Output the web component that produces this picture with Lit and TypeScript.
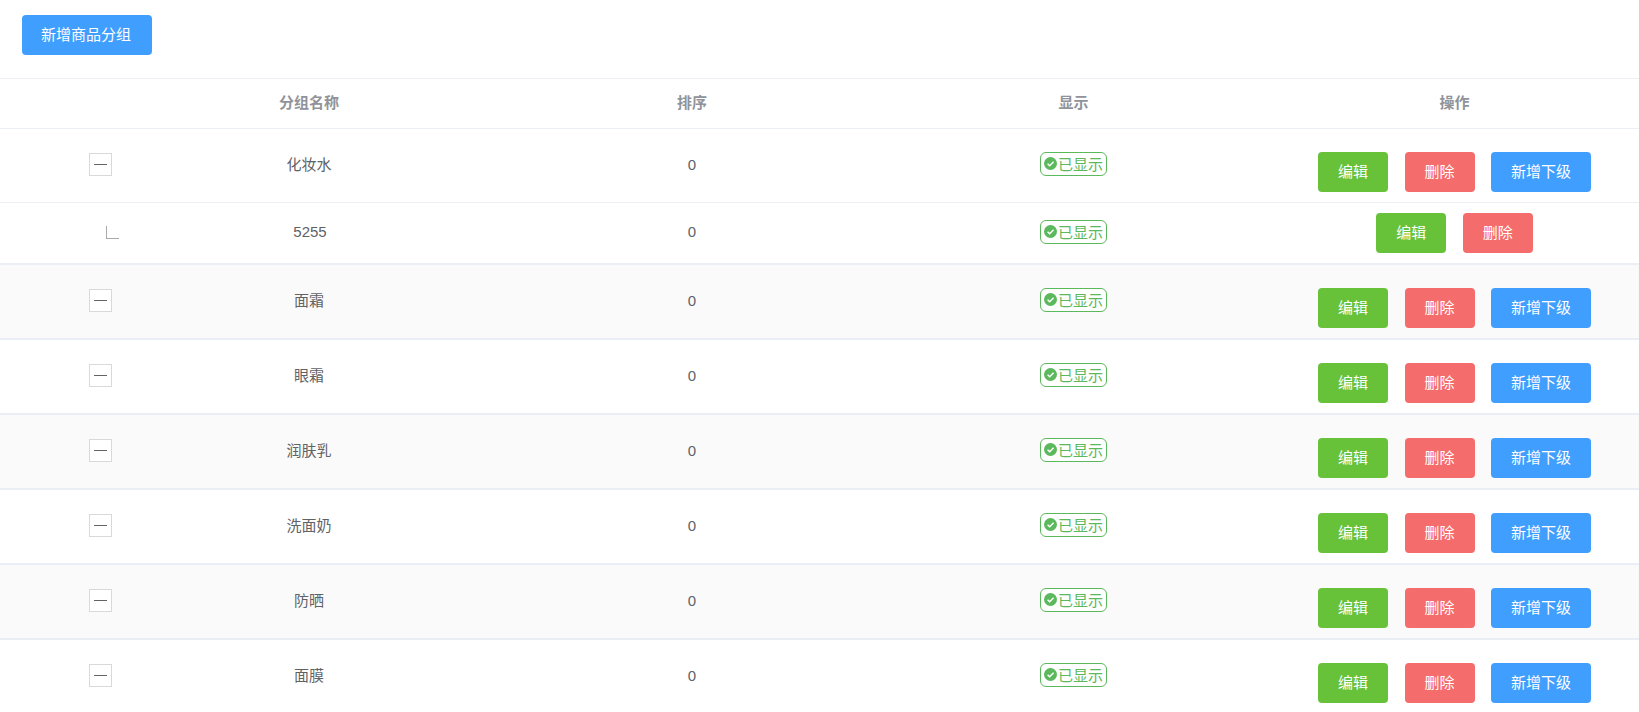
import { LitElement, html, css, svg } from "lit";
import { customElement } from "lit/decorators.js";

const ROWS = [
  { name: "化妆水", cls: "parent tall" },
  { name: "5255", cls: "child" },
  { name: "面霜", cls: "parent alt" },
  { name: "眼霜", cls: "parent" },
  { name: "润肤乳", cls: "parent alt" },
  { name: "洗面奶", cls: "parent" },
  { name: "防晒", cls: "parent alt" },
  { name: "面膜", cls: "parent" },
];

const check = svg`<svg class="chk" viewBox="0 0 13 13" width="13" height="13"><circle cx="6.5" cy="6.5" r="6.5" fill="#5cb85c"/><path d="M3.6 6.7l2.1 2.1L9.6 4.8" fill="none" stroke="#fff" stroke-width="1.4"/></svg>`;

@customElement("app-root")
export class AppRoot extends LitElement {
  static styles = css`
    :host {
      display: block;
      width: 1639px;
      height: 712px;
      overflow: hidden;
      background: #fff;
      font-family: "Liberation Sans", "Noto Sans CJK SC", sans-serif;
      font-size: 15px;
      color: #606266;
    }
    .top { padding: 15px 22px 23px; display: flex; }
    .btn {
      height: 40px;
      border: 0;
      border-radius: 4px;
      color: #fff;
      font: inherit;
      padding: 0 0 4px;
      display: flex;
      align-items: center;
      justify-content: center;
      flex: none;
    }
    .blue { background: #409eff; }
    .green { background: #67c23a; }
    .red { background: #f56c6c; }
    .w130 { width: 130px; padding-right: 2px; }
    .w70 { width: 70px; }
    .w100 { width: 100px; }
    .row {
      display: grid;
      grid-template-columns: 117px 384px 382px 381px 1fr;
      align-items: center;
      border-bottom: 1px solid #ebeef5;
      box-sizing: border-box;
      text-align: center;
      height: 75px;
    }
    .head {
      height: 51px;
      border-top: 1px solid #ebeef5;
      font-weight: 700;
      color: #909399;
      padding-bottom: 4px;
    }
    .head .last { padding-left: 6px; }
    .child { height: 62px; border-bottom-width: 2px; }
    .parent { border-bottom-width: 2px; }
    .tall { height: 74px; border-bottom-width: 1px; }
    .alt { background: #fafafa; }
    .exp {
      display: flex;
      justify-content: flex-end;
      padding-right: 5px;
      padding-bottom: 2px;
    }
    .box {
      width: 23px;
      height: 23px;
      box-sizing: border-box;
      border: 1px solid #d9d9d9;
      display: flex;
      align-items: center;
      justify-content: center;
      background: #fff;
    }
    .box i { display: block; width: 13px; height: 1px; background: #606266; }
    .corner {
      width: 12px;
      height: 12px;
      border-left: 1px solid #aaa;
      border-bottom: 1px solid #aaa;
      margin-right: -7px;
    }
    .name { padding-bottom: 4px; }
    .child .name { padding-left: 2px; }
    .sort { padding-bottom: 2px; }
    .child .sort { padding-bottom: 4px; }
    .show { display: flex; justify-content: center; padding-bottom: 4px; }
    .child .show { padding-bottom: 2px; }
    .badge {
      display: flex;
      align-items: center;
      width: 67px;
      height: 24px;
      box-sizing: border-box;
      border: 1px solid #5cb85c;
      border-radius: 6px;
      padding: 0 0 1px 3px;
      gap: 1px;
      color: #5cb85c;
      background: #fff;
      white-space: nowrap;
    }
    .chk { flex: none; }
    .ops { display: flex; justify-content: center; gap: 16.5px; padding-left: 6px; }
    .parent .ops { padding-top: 13px; }
  `;

  render() {
    return html`
      <div class="top"><button class="btn blue w130">新增商品分组</button></div>
      <div class="row head">
        <div></div><div>分组名称</div><div>排序</div><div>显示</div><div class="last">操作</div>
      </div>
      ${ROWS.map((r) => {
        const isChild = r.cls === "child";
        return html`
          <div class="row ${r.cls}">
            <div class="exp">
              ${isChild ? html`<div class="corner"></div>` : html`<div class="box"><i></i></div>`}
            </div>
            <div class="name">${r.name}</div>
            <div class="sort">0</div>
            <div class="show"><span class="badge">${check}已显示</span></div>
            <div class="ops">
              <button class="btn green w70">编辑</button>
              <button class="btn red w70">删除</button>
              ${isChild ? "" : html`<button class="btn blue w100">新增下级</button>`}
            </div>
          </div>
        `;
      })}
    `;
  }
}
